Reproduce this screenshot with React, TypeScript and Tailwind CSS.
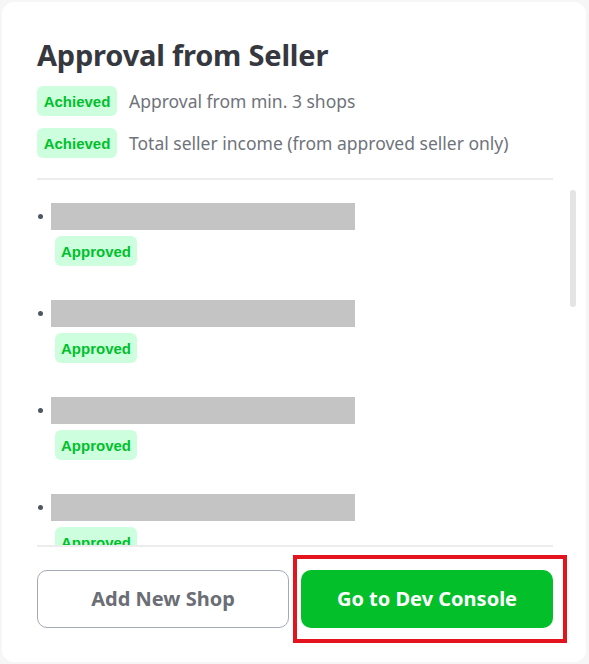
import React from 'react';

const shops = Array.from({ length: 11 }, (_, i) => i);

function Badge({ label, className = '' }: { label: string; className?: string }) {
  return (
    <span
      className={`inline-flex items-center rounded-md bg-[#cdffdf] px-[6px] h-[30px] text-[15px] leading-none font-bold text-[#00c02b] ${className}`}
      style={{ fontFamily: '"Liberation Sans", Arial, sans-serif' }}
    >
      {label}
    </span>
  );
}

export default function App() {
  return (
    <div className="w-[589px] h-[664px] bg-[#f6f6f6] p-[2px] pr-[3px]">
      <div
        className="flex flex-col h-[660px] rounded-xl bg-white pl-[35px] pr-[33px] pt-[35px] pb-[34px]"
        style={{ fontFamily: '"Noto Sans", "Open Sans", sans-serif' }}
      >
        <h1 className="text-[29px] leading-[36px] font-bold text-[#35383f] tracking-[-0.2px]">Approval from Seller</h1>

        {/* requirement checklist */}
        <div className="mt-[13px] flex flex-col gap-[12px]">
          <div className="flex items-center gap-[12px]">
            <Badge label="Achieved" className="h-[29px] w-[80px] justify-center" />
            <span className="text-[17.5px] text-[#6f737b]">Approval from min. 3 shops</span>
          </div>
          <div className="flex items-center gap-[12px]">
            <Badge label="Achieved" className="h-[29px] w-[80px] justify-center" />
            <span className="text-[17.5px] text-[#6f737b]">Total seller income (from approved seller only)</span>
          </div>
        </div>

        <div className="mt-[20px] h-[2px] bg-[#ececec]" />

        {/* shop list, scrollbar drawn as an overlay */}
        <div className="relative mt-[10px] mr-[-23px] h-[355px]">
          <div className="h-full overflow-y-auto pt-[13px] [scrollbar-width:none]">
            {shops.map((i) => (
              <div key={i} className="mb-[34px]">
                <div className="flex items-center">
                  <span className="ml-[1px] mr-[8px] h-[5px] w-[5px] rounded-full bg-[#4e5563]" />
                  <div className="h-[27px] w-[304px] bg-[#c4c4c4]" />
                </div>
                <Badge label="Approved" className="mt-[6px] ml-[18px]" />
              </div>
            ))}
          </div>
          <span className="absolute right-0 top-0 h-[117px] w-[6px] rounded-full bg-[#e4e4e4]" />
        </div>

        <div className="h-[2px] bg-[#ececec]" />

        {/* actions */}
        <div className="mt-[23px] grid grid-cols-2 gap-[12px]">
          <button className="h-[58px] rounded-[10px] border border-[#a4aab5] bg-white text-[20px] font-bold text-[#6b6e75]">
            Add New Shop
          </button>
          <div className="relative">
            <button className="h-[58px] w-full rounded-[10px] bg-[#02bf2a] text-[20px] font-bold text-white">
              Go to Dev Console
            </button>
            <span className="pointer-events-none absolute -left-[8px] -right-[14px] -top-[15px] -bottom-[15px] border-4 border-[#e4141f]" />
          </div>
        </div>
      </div>
    </div>
  );
}
